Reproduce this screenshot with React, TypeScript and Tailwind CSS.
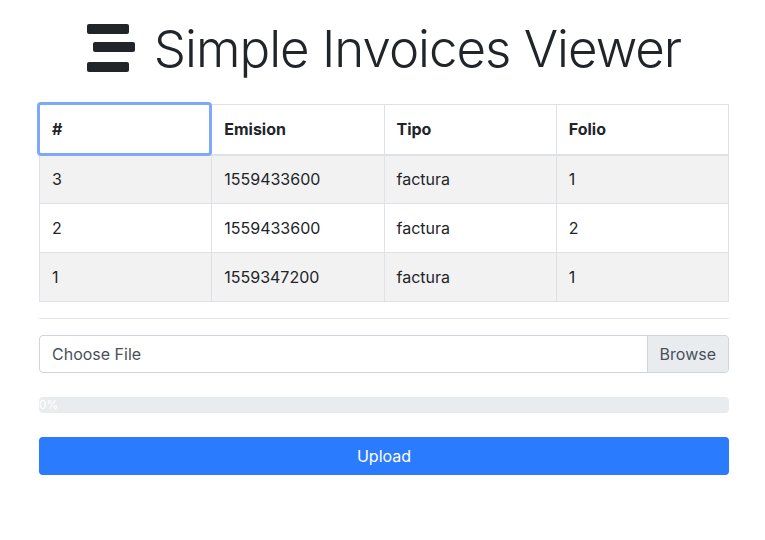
import React from "react";

const rows = [
  ["3", "1559433600", "factura", "1"],
  ["2", "1559433600", "factura", "2"],
  ["1", "1559347200", "factura", "1"],
];

export default function App() {
  return (
    <div className="w-[765px] h-[540px] bg-white text-[#212529]" style={{ fontFamily: "Inter, 'Noto Sans', sans-serif" }}>
      <div className="ml-[39px] w-[690px]">
        <div className="flex items-center justify-center h-[96px] gap-[19px]">
          <svg width="48" height="50" viewBox="0 0 48 50">
            <rect x="0" y="1" width="42" height="10" rx="2" fill="#212529" />
            <rect x="6" y="19" width="42" height="10" rx="2" fill="#212529" />
            <rect x="0" y="39" width="42" height="10" rx="2" fill="#212529" />
          </svg>
          <h1 className="text-[51px] font-light leading-none tracking-[-1px]">Simple Invoices Viewer</h1>
        </div>
        <table className="w-full mt-[8px] border-collapse text-[16px]">
          <thead>
            <tr className="h-[50px]">
              <th className="w-1/4 text-left font-bold px-[12px] border border-[#dee2e6] border-b-2 relative">
                <div className="absolute -left-[3px] -top-[3px] -right-[1px] -bottom-[2px] border-[3px] border-[#80a8f8] rounded-[4px]"></div>
                #
              </th>
              <th className="w-1/4 text-left font-bold px-[12px] border border-[#dee2e6] border-b-2">Emision</th>
              <th className="w-1/4 text-left font-bold px-[12px] border border-[#dee2e6] border-b-2">Tipo</th>
              <th className="w-1/4 text-left font-bold px-[12px] border border-[#dee2e6] border-b-2">Folio</th>
            </tr>
          </thead>
          <tbody>
            {rows.map((r, i) => (
              <tr key={i} className={"h-[49px] " + (i % 2 === 0 ? "bg-[#f2f2f2]" : "bg-white")}>
                {r.map((c, j) => (
                  <td key={j} className="px-[12px] border border-[#dee2e6]">{c}</td>
                ))}
              </tr>
            ))}
          </tbody>
        </table>
        <div className="h-px bg-[#e5e5e5] mt-[16px]"></div>
        <div className="mt-[16px] h-[38px] flex border border-[#ced4da] rounded-[4px] overflow-hidden text-[16px] text-[#495057]">
          <div className="flex-1 flex items-center px-[12px]">Choose File</div>
          <div className="flex items-center px-[12px] bg-[#e9ecef] border-l border-[#ced4da]">Browse</div>
        </div>
        <div className="mt-[24px] h-[16px] bg-[#e9ecef] rounded-[4px] text-[12px] text-white leading-[16px] flex items-center">0%</div>
        <button className="mt-[24px] w-full h-[38px] bg-[#2b7bff] text-white rounded-[4px] text-[16px]">Upload</button>
      </div>
    </div>
  );
}
